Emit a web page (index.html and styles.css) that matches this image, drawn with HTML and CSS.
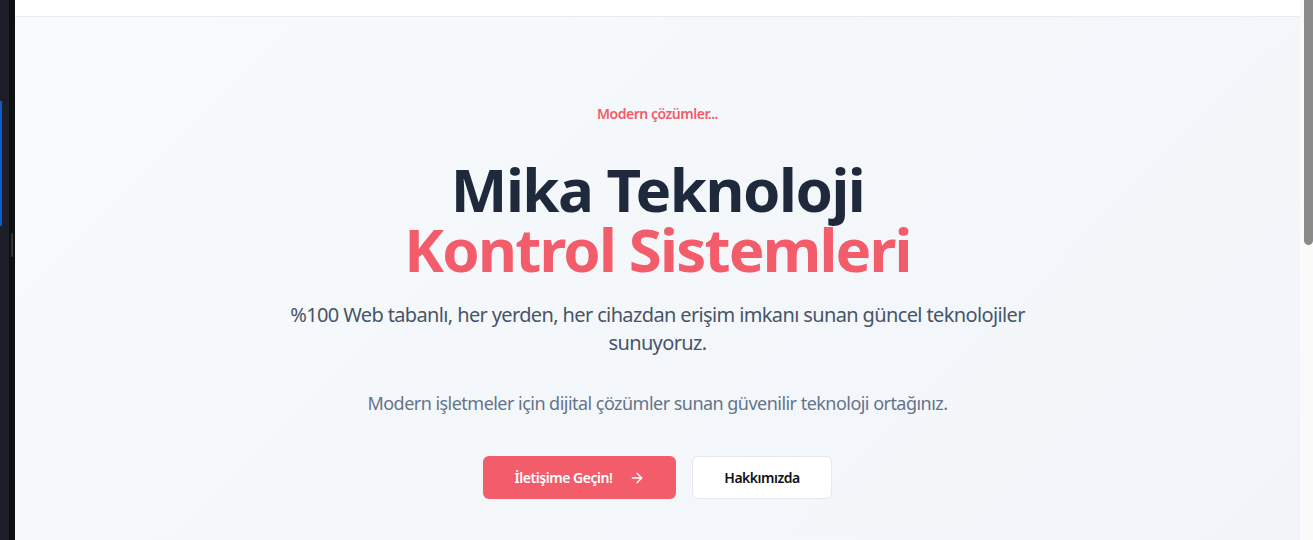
FILE: index.html
```html
<!DOCTYPE html>
<html lang="tr">
<head>
<meta charset="utf-8">
<title>Mika Teknoloji</title>
<link rel="stylesheet" href="styles.css">
</head>
<body>
<div class="frame">
  <aside class="edge">
    <div class="edge-a"><span class="edge-blue"></span></div>
    <div class="edge-b"><span class="edge-grip"></span></div>
  </aside>
  <main class="page">
    <header class="topbar"></header>
    <section class="hero">
      <p class="tagline">Modern çözümler...</p>
      <h1 class="title">
        <span class="title-dark">Mika Teknoloji</span>
        <span class="title-accent">Kontrol Sistemleri</span>
      </h1>
      <p class="lead">%100 Web tabanlı, her yerden, her cihazdan erişim imkanı sunan güncel teknolojiler sunuyoruz.</p>
      <p class="sub">Modern işletmeler için dijital çözümler sunan güvenilir teknoloji ortağınız.</p>
      <div class="actions">
        <a class="btn btn-primary" href="#">İletişime Geçin!
          <svg class="arrow" viewBox="0 0 24 24" width="16" height="16" fill="none" stroke="currentColor" stroke-width="2" stroke-linecap="round" stroke-linejoin="round"><path d="M5 12h14"/><path d="M12 5l7 7-7 7"/></svg>
        </a>
        <a class="btn btn-secondary" href="#">Hakkımızda</a>
      </div>
    </section>
  </main>
  <div class="scrollbar"><span class="thumb"></span></div>
</div>
</body>
</html>
```
FILE: styles.css
```css
* { box-sizing: border-box; }
html, body { margin: 0; padding: 0; height: 100%; overflow: hidden; }
body {
  font-family: "Noto Sans", "Open Sans", "Liberation Sans", sans-serif;
  background: #ffffff;
}
.frame {
  display: flex;
  height: 540px;
  width: 1313px;
}
.edge {
  display: flex;
  width: 15px;
  flex: 0 0 15px;
}
.edge-a {
  width: 9px;
  background: #1c1f27;
  padding-top: 101px;
}
.edge-blue {
  display: block;
  width: 2px;
  height: 125px;
  background: #0b5cc9;
}
.edge-b {
  width: 6px;
  background: #0d0f13;
  padding-top: 233px;
  padding-left: 2px;
}
.edge-grip {
  display: block;
  width: 2px;
  height: 24px;
  background: #30333b;
  border-radius: 1px;
}
.page {
  flex: 1;
  display: flex;
  flex-direction: column;
  background: linear-gradient(135deg, #f8fafc 0%, #f1f5f9 100%);
}
.topbar {
  height: 17px;
  flex: 0 0 17px;
  background: #ffffff;
  border-bottom: 1px solid #e8ebf0;
}
.hero {
  display: flex;
  flex-direction: column;
  align-items: center;
  text-align: center;
  padding-top: 87px;
}
.tagline {
  margin: 0 0 35px;
  font-size: 14px;
  line-height: 20px;
  font-weight: 600;
  color: #f25c6b;
  letter-spacing: -0.48px;
}
.title {
  margin: 0 0 22px;
  font-size: 60px;
  line-height: 60px;
  font-weight: 700;
  letter-spacing: -1.5px;
}
.title span { display: block; }
.title-dark { color: #1e293b; }
.title-accent { color: #f25c6b; letter-spacing: -1.8px; }
.lead {
  margin: 0;
  max-width: 760px;
  font-size: 20px;
  line-height: 28px;
  color: #475569;
  letter-spacing: -0.63px;
}
.sub {
  margin: 32px 0 0;
  font-size: 18px;
  line-height: 28px;
  color: #64748b;
  letter-spacing: -0.53px;
}
.actions {
  display: flex;
  gap: 16px;
  margin-top: 39px;
}
.btn {
  display: inline-flex;
  align-items: center;
  justify-content: center;
  height: 43px;
  border-radius: 6px;
  font-size: 14px;
  font-weight: 600;
  text-decoration: none;
  letter-spacing: -0.45px;
}
.btn-primary {
  width: 193px;
  background: #f25c6b;
  color: #ffffff;
  gap: 16px;
}
.btn-secondary {
  width: 140px;
  background: #ffffff;
  color: #111111;
  border: 1px solid #e5e7eb;
  letter-spacing: -0.5px;
}
.arrow { display: block; }
.scrollbar {
  width: 13px;
  flex: 0 0 13px;
  background: #fafafa;
  padding-left: 4px;
}
.thumb {
  display: block;
  width: 9px;
  height: 245px;
  background: #8a8a8a;
  border-radius: 0 0 5px 5px;
}
```
